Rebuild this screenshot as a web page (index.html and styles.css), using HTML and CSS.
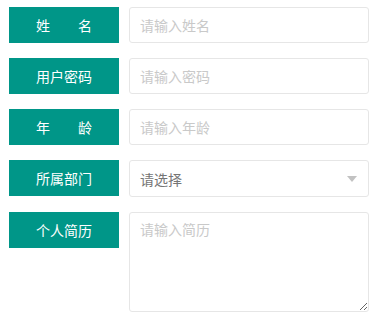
FILE: index.html
```html
<!DOCTYPE html>
<html lang="zh-CN">
<head>
  <meta charset="UTF-8">
  <title>表单</title>
  <link rel="stylesheet" href="styles.css">
</head>
<body>

<form class="user-form">
  <div class="form-item">
    <label class="form-label"><span class="spread">姓名</span></label>
    <input class="form-input" type="text" placeholder="请输入姓名">
  </div>

  <div class="form-item">
    <label class="form-label">用户密码</label>
    <input class="form-input" type="password" placeholder="请输入密码">
  </div>

  <div class="form-item">
    <label class="form-label"><span class="spread">年龄</span></label>
    <input class="form-input" type="text" placeholder="请输入年龄">
  </div>

  <div class="form-item">
    <label class="form-label">所属部门</label>
    <div class="form-select">
      <span>请选择</span>
      <i class="select-arrow"></i>
    </div>
  </div>

  <div class="form-item">
    <label class="form-label">个人简历</label>
    <textarea class="form-textarea" placeholder="请输入简历"></textarea>
  </div>
</form>

</body>
</html>
```

FILE: styles.css
```css
html, body {
  margin: 0;
  background: #fff;
  font-family: "Microsoft YaHei", "Noto Sans CJK SC", sans-serif;
  font-size: 14px;
}

.user-form {
  padding: 7px 9px 0 9px;
}

.form-item {
  display: flex;
  align-items: flex-start;
  gap: 10px;
  margin-bottom: 15px;
}

.form-label {
  flex: 0 0 110px;
  height: 36px;
  display: flex;
  align-items: center;
  justify-content: center;
  background: #009688;
  color: #fff;
  box-sizing: border-box;
}

.spread {
  display: inline-block;
  width: 56px;
  text-align: justify;
  text-align-last: justify;
}

.form-input,
.form-select,
.form-textarea {
  box-sizing: border-box;
  width: 240px;
  border: 1px solid #e6e6e6;
  border-radius: 3px;
  background: #fff;
  font-family: inherit;
  font-size: 14px;
  color: #666;
  outline: none;
}

.form-input {
  height: 36px;
  padding: 0 10px;
}

.form-input::placeholder,
.form-textarea::placeholder {
  color: #c9c9c9;
}

.form-select {
  width: 242px;
  height: 37px;
  padding: 0 10px;
  display: flex;
  align-items: center;
  justify-content: space-between;
  color: #757575;
}

.select-arrow {
  width: 0;
  height: 0;
  border-left: 5px solid transparent;
  border-right: 5px solid transparent;
  border-top: 6px solid #c2c2c2;
  margin-right: 1px;
}

.form-textarea {
  height: 100px;
  padding: 6px 10px;
  line-height: 20px;
  resize: both;
}
```
